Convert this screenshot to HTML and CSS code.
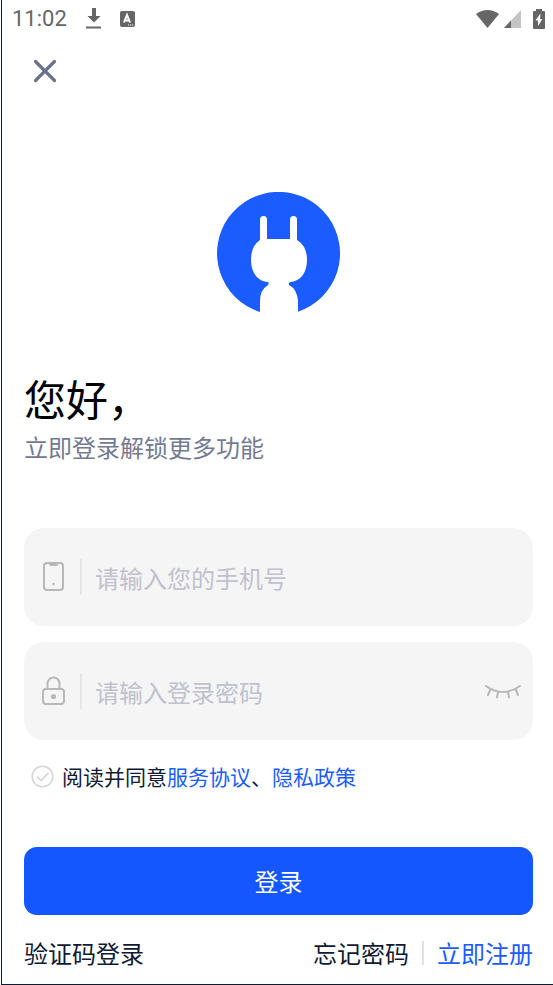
FILE: index.html
```html
<!DOCTYPE html>
<html lang="zh-CN">
<head>
<meta charset="utf-8">
<meta name="viewport" content="width=device-width, initial-scale=1">
<title>登录</title>
<link rel="stylesheet" href="styles.css">
</head>
<body>
<div class="screen">
  <header class="status">
    <span class="clock">11:02</span>
    <svg class="download" width="16" height="22" viewBox="0 0 16 22" aria-hidden="true"><path d="M6 0h4v8h4.500L8 14.500 1.500 8H6zM0 18.500h15v2H0z" fill="#666"/></svg>
    <svg width="15" height="17" viewBox="0 0 15 17" aria-hidden="true"><rect width="15" height="16" rx="2" fill="#666"/><path d="M4 11.500 7 4l3 7.500M5 9.500h4" fill="none" stroke="#fff" stroke-width="2"/><path d="M8 14h1.200M10 14h1.200M12 14h1.200" stroke="#fff"/></svg>
    <span class="radios">
      <svg width="25" height="20" viewBox="0 0 25 20" aria-hidden="true"><path d="M1 5Q12.500-3 24 5L12.500 19z" fill="#666"/></svg>
      <svg width="17" height="18" viewBox="0 0 17 18" aria-hidden="true"><path d="M17 0v18H0z" fill="#c4c4c4"/><path d="M7 10.500V18H0z" fill="#666"/></svg>
      <svg class="battery" width="12" height="20" viewBox="0 0 12 20" aria-hidden="true"><path d="M3 0h6v2h2q1 0 1 1v16q0 1-1 1H1q-1 0-1-1V3q0-1 1-1h2z" fill="#666"/><path d="M7.500 4.500 2.500 11.500H5V17l4.500-7H7z" fill="#fff"/></svg>
    </span>
  </header>
  <button class="close" type="button" aria-label="关闭">
    <svg width="24" height="24" viewBox="0 0 24 24" aria-hidden="true"><path d="M2.500 2.500l19 19M21.500 2.500l-19 19" stroke="#69728a" stroke-width="3.200" stroke-linecap="round"/></svg>
  </button>
  <main>
    <svg class="logo" width="123" height="123" viewBox="0 0 123 123" aria-hidden="true">
      <path d="M43 120A61.500 61.500 0 1 1 81 119.700V109Q80 97 72 93Q71 90 74 90C84 89 90 80 90 68Q90 54 80 48V27.500a3.500 3.500 0 0 0-7 0V47H50V27.500a3.500 3.500 0 0 0-7 0V48Q34 54 34 68C34 80 40 89 50 90Q53 90 51 93Q43 98 43 109z" fill="#1a5cff"/>
    </svg>
    <h1>您好，</h1>
    <p class="subtitle">立即登录解锁更多功能</p>
    <form>
      <div class="field">
        <label for="phone" aria-label="手机号"><svg width="26" height="32" viewBox="0 0 26 32" aria-hidden="true"><g fill="none" stroke="#b8b8b8" stroke-width="2"><rect x="3" y="2" width="19" height="27" rx="3"/><path d="M9 3q0 1 1 1h5q1 0 1-1"/></g><circle cx="12.500" cy="23" r="1.300" fill="#b8b8b8"/></svg></label>
        <input id="phone" type="tel" placeholder="请输入您的手机号">
      </div>
      <div class="field">
        <label for="password" aria-label="登录密码"><svg width="26" height="32" viewBox="0 0 26 32" aria-hidden="true"><g fill="none" stroke="#b8b8b8" stroke-width="2"><rect x="2" y="14" width="21" height="15" rx="3"/><path d="M6.500 14V8.500a6 6 0 0 1 12 0V14"/></g><circle cx="12.500" cy="21.500" r="2.600" fill="#b8b8b8"/></svg></label>
        <input id="password" type="password" placeholder="请输入登录密码">
        <button class="reveal" type="button" aria-label="显示密码"><svg width="36" height="18" viewBox="0 0 36 18" aria-hidden="true"><path d="M1 4Q18 16 35 4M5.500 7 3 13M13 10l-1 5.500M23 10l1 5.500M30.500 7l2.500 6" fill="none" stroke="#b8b8b8" stroke-width="2" stroke-linecap="round"/></svg></button>
      </div>
      <div class="terms">
        <span class="tick">
          <input id="agree" type="checkbox">
          <svg width="23" height="23" viewBox="0 0 23 23" aria-hidden="true"><g fill="none" stroke="#d5d5da" stroke-width="1.600"><circle cx="11.500" cy="11.500" r="10.300"/><path d="m6 11.500 4 4 7.500-7.500"/></g></svg>
        </span>
        <span><label for="agree">阅读并同意</label><a href="#service">服务协议</a>、<a href="#privacy">隐私政策</a></span>
      </div>
      <button class="submit" type="submit">登录</button>
    </form>
    <nav class="links">
      <a href="#code">验证码登录</a>
      <a class="forgot" href="#forgot">忘记密码</a>
      <a class="register" href="#register">立即注册</a>
    </nav>
  </main>
</div>
</body>
</html>
```
FILE: styles.css
```css
* {
  box-sizing: border-box;
}

body {
  margin: 0;
  background: #fff;
  color: #101a33;
  font-family: "Noto Sans CJK SC", sans-serif;
  font-size: 24px;
  line-height: 32px;
}

svg {
  display: block;
}

button {
  padding: 0;
  border: 0;
  background: none;
  font: inherit;
  cursor: pointer;
}

a {
  color: #1a5cff;
  text-decoration: none;
}

.screen {
  min-height: 100vh;
  margin-left: 1px;
  padding: 0 20px 0 22px;
  border-left: 1px solid #101a33;
  border-bottom: 1px solid #101a33;
}

.status {
  display: flex;
  align-items: center;
  height: 38px;
  margin: 0 -12px;
  color: #666;
  font-family: Roboto, sans-serif;
  font-size: 22px;
}

.download {
  margin: 0 18px 0 19px;
}

.radios {
  display: flex;
  align-items: center;
  gap: 4px;
  margin-left: auto;
}

.battery {
  margin-left: 8px;
}

.close {
  display: block;
  margin: 21px 0 0 9px;
}

.logo {
  margin: 109px auto 0;
}

h1 {
  margin: 56px 0 6px;
  color: #000;
  font-size: 42px;
  font-weight: 400;
  line-height: 54px;
}

.subtitle {
  margin: 0;
  color: #737a92;
}

form {
  margin-top: 65px;
}

.field {
  display: flex;
  align-items: center;
  height: 98px;
  margin-bottom: 16px;
  padding: 0 12px 0 17px;
  border-radius: 20px;
  background: #f5f5f5;
}

.field input {
  flex: 1;
  min-width: 0;
  height: 36px;
  margin-left: 13px;
  padding: 0 13px;
  border: 0;
  border-left: 2px solid #e6e6e8;
  outline: 0;
  background: none;
  color: #101a33;
  font: inherit;
}

.field input::placeholder {
  color: #c0c1ce;
  opacity: 1;
}

.terms {
  display: flex;
  align-items: center;
  gap: 8px;
  margin: 20px 0 55px 7px;
  font-size: 21px;
}

.tick {
  position: relative;
}

.tick input {
  position: absolute;
  inset: 0;
  width: 100%;
  height: 100%;
  margin: 0;
  opacity: 0;
}

.submit {
  display: block;
  width: 100%;
  height: 68px;
  border-radius: 13px;
  background: #1456ff;
  color: #fff;
}

.links {
  display: flex;
  align-items: center;
  margin-top: 22px;
}

.links a {
  color: #101a33;
}

.links .forgot {
  margin-left: auto;
}

.links .register {
  display: flex;
  align-items: center;
  color: #1a5cff;
}

.links .register::before {
  content: "";
  width: 2px;
  height: 24px;
  margin: 0 13px;
  background: #e2e2e6;
}
```
